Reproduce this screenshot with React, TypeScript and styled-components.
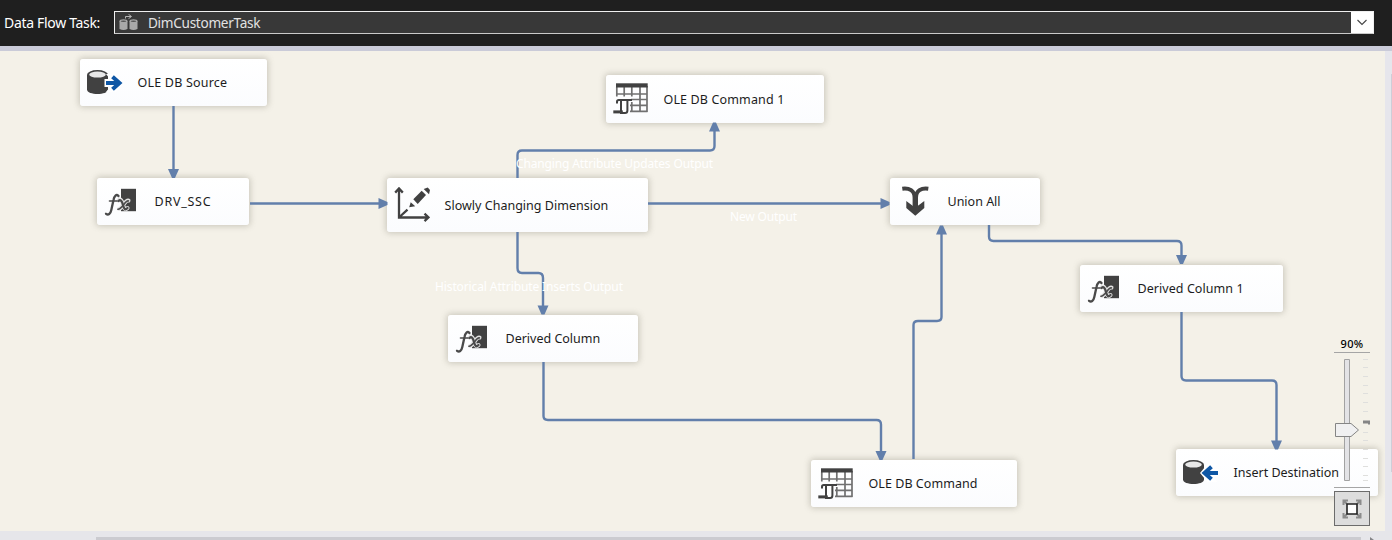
import React from 'react';
import styled, { createGlobalStyle } from 'styled-components';

const GlobalStyle = createGlobalStyle`
  *, *::before, *::after { box-sizing: border-box; }
  body { margin: 0; overflow: hidden; }
`;

const Page = styled.div`
  display: flex;
  flex-direction: column;
  width: 1392px;
  height: 540px;
  background: #e6e6ea;
  font-family: 'Noto Sans', sans-serif;
`;

const Header = styled.header`
  display: flex;
  align-items: flex-start;
  height: 51px;
  flex: none;
  padding: 11px 0 0 4px;
  background: #1f1f1f;
  border-bottom: 5px solid #cacbd8;
`;

const HeaderLabel = styled.label`
  width: 110px;
  font-size: 14px;
  line-height: 23px;
  letter-spacing: -0.32px;
  color: #fff;
  white-space: nowrap;
`;

const Select = styled.div`
  display: flex;
  align-items: stretch;
  width: 1260px;
  height: 23px;
  border: 1px solid #f0f0f0;
  border-bottom-color: #c9c9c9;
  background: #383838;
`;

const SelectValue = styled.div`
  display: flex;
  flex: 1;
  align-items: center;
  gap: 10px;
  padding-left: 4px;
  font-size: 13.6px;
  line-height: 21px;
  letter-spacing: -0.3px;
  color: #e2e2e2;
`;

const SelectArrow = styled.div`
  display: flex;
  align-items: center;
  justify-content: center;
  width: 22px;
  background: #fff;
`;

const Body = styled.div`
  display: flex;
  height: 480px;
`;

const Canvas = styled.main`
  position: relative;
  width: 1385px;
  height: 480px;
  overflow: hidden;
  background: #f4f1e8;
`;

const VerticalTrack = styled.div`
  display: flex;
  justify-content: flex-end;
  width: 7px;
  padding-top: 23px;
  background: #e6e6ec;
`;

const VerticalThumb = styled.div`
  width: 1px;
  height: 398px;
  background: #ceced8;
`;

const HorizontalTrack = styled.div`
  display: flex;
  height: 9px;
  padding: 6px 0 0 96px;
  background: #e6e6ea;
`;

const HorizontalThumb = styled.div`
  width: 1265px;
  height: 3px;
  background: #cbcbd0;
`;

const ScrollArrow = styled.svg`
  margin: 0 0 0 9px;
`;

const Edges = styled.svg`
  position: absolute;
  inset: 0;
`;

const EdgeLabel = styled.text`
  font: 12px 'Noto Sans', sans-serif;
  fill: #fff;
`;

const NodeCard = styled.div<{ $x: number; $y: number; $w: number; $h: number }>`
  position: absolute;
  left: ${(p) => p.$x}px;
  top: ${(p) => p.$y - 51}px;
  width: ${(p) => p.$w}px;
  height: ${(p) => p.$h}px;
  display: flex;
  align-items: center;
  padding-left: 6px;
  border-radius: 3px;
  background: linear-gradient(#ffffff, #fbfcfe);
  box-shadow: 0 0 6px 1px rgba(110, 105, 90, 0.33);
`;

const NodeLabel = styled.span<{ $spacing: number }>`
  margin-left: 14.5px;
  font-size: 12.5px;
  line-height: 19px;
  letter-spacing: ${(p) => p.$spacing}px;
  color: #1c1c1c;
  white-space: nowrap;
`;

const Icon = styled.svg`
  flex: none;
  display: block;
`;

const ZoomPanel = styled.div`
  position: absolute;
  left: 1334px;
  top: 286px;
  width: 36px;
  display: flex;
  flex-direction: column;
`;

const ZoomValue = styled.div`
  height: 16px;
  font-size: 11px;
  font-weight: 500;
  line-height: 14px;
  letter-spacing: 0.3px;
  text-align: center;
  color: #000;
  border-bottom: 1px solid #a5a5a5;
`;

const ZoomSlider = styled.svg`
  display: block;
`;

const FitButton = styled.button`
  display: flex;
  align-items: center;
  justify-content: center;
  width: 36px;
  height: 35px;
  margin: 3px 0 0;
  padding: 0;
  border: 1px solid #6c6c6c;
  background: #dddddd;
`;

type Kind = 'source' | 'destination' | 'fx' | 'dimension' | 'command' | 'union';

const DARK = '#414141';
const BLUE = '#0f57a5';

function NodeIcon({ kind }: { kind: Kind }) {
  if (kind === 'source' || kind === 'destination') {
    return (
      <Icon width="37" height="30" viewBox="0 0 37 30">
        <path d="M1 7v14.500c0 6 21 6 21 0V7z" fill={DARK} />
        <ellipse cx="11.500" cy="6.800" rx="10.500" ry="4.800" fill={DARK} />
        <ellipse cx="11.500" cy="6.600" rx="8.300" ry="3" fill="#e8e8e8" />
        {kind === 'source' ? (
          <>
            <path d="M18.500 11h5.500l-4-5h10l7 9-7 9h-10l4-5h-5.500z" fill="#fff" />
            <path d="M20 15h14M26.500 8.700l7 6.300-7 6.300" fill="none" stroke={BLUE} strokeWidth="4" />
          </>
        ) : (
          <>
            <path d="M37 11h-5.500l4-5h-10l-7.500 9 7.500 9h10l-4-5H37z" fill="#fff" />
            <path d="M36 15H22M29.500 8.700l-7 6.300 7 6.300" fill="none" stroke={BLUE} strokeWidth="4" />
          </>
        )}
      </Icon>
    );
  }
  if (kind === 'fx') {
    return (
      <Icon width="37" height="30" viewBox="0 0 37 30">
        <path d="M18 1.800h15v22.400H18z" fill={DARK} />
        <g fill="none" strokeLinecap="round">
          <g stroke="#e4e4e4" strokeWidth="4">
            <path d="M15.500 13.500c2-2 3.500 0 4.500 4s2 6 4.500 3.500M25.500 13.500c-3-1.500-6 8-9.500 8.500" />
          </g>
          <g stroke="#4a4a4a">
            <path d="M15.500 9c-2-2.500-4.300 0-5 4L8.300 23c-.8 4-3 5.500-5.300 3.800" strokeWidth="2.300" />
            <path d="M6.500 14h7.500" strokeWidth="1.600" />
            <path d="M15.500 14c2-2 3.500 0 4.500 4s2 5.500 4.500 3" strokeWidth="2.300" />
            <path d="M25.500 14c-3-1.500-6 7.800-10.500 8.300" strokeWidth="1.600" />
          </g>
        </g>
      </Icon>
    );
  }
  if (kind === 'dimension') {
    return (
      <Icon width="37" height="38" viewBox="0 0 37 38">
        <g fill="none" stroke={DARK} strokeWidth="2.300">
          <path d="M6 3v28.500H35M2.200 6.600 6 2.500l3.800 4.100M31.500 27.700l4 3.700-4 3.700M6.500 31l8-7.300" />
        </g>
        <path d="m20.300 13.300 8.400-8.600 4.300 4.300-8.300 9z" fill={DARK} />
        <path d="m17.700 16.300 4.500 4-6 1z" fill={DARK} />
        <path d="m30.700 2.900 4-1.400L37 4l-1 4.200z" fill={DARK} />
      </Icon>
    );
  }
  if (kind === 'command') {
    return (
      <Icon width="37" height="34" viewBox="0 0 37 34">
        <path
          d="M4.800 5v9.500M12.200 5v9.500M19.800 5v9.500M28 5v24.500M35 4v26M4 12h31.500M19 17.500h16.500M18 23.300h17.500M18 29.300h17.500M19.800 20v9.500"
          fill="none"
          stroke="#707070"
          strokeWidth="1.700"
        />
        <path d="M4 1.300h31.700v4.200H4z" fill={DARK} />
        <path d="M9 18h6.300v13H9z" fill="#fff" />
        <path d="M5 21.500v-1.700c0-1 .8-1.700 1.800-1.700H20M9 18.500V29M15.400 18.500v10c0 1.600-1 2.600-2.400 2.600H8" fill="none" stroke={DARK} strokeWidth="2" />
        <path d="M1.300 29.900h9.500" stroke={DARK} strokeWidth="3" />
      </Icon>
    );
  }
  return (
    <Icon width="37" height="34" viewBox="0 0 37 34">
      <path d="M6.300 3.700c7-1 12.300 2 12.300 9V26M32.300 3.700c-7-1-12.300 2-12.300 9V26" fill="none" stroke={DARK} strokeWidth="4" />
      <path d="M10.300 16l9 6.800 9-6.800v7L19.300 30.800l-9-7.800z" fill={DARK} />
    </Icon>
  );
}

interface NodeSpec {
  kind: Kind;
  label: string;
  box: [number, number, number, number];
  spacing: number;
}

const nodes: NodeSpec[] = [
  { kind: 'source', label: 'OLE DB Source', box: [80, 59, 187, 47], spacing: 0.2 },
  { kind: 'fx', label: 'DRV_SSC', box: [97, 178, 152, 47], spacing: 0.75 },
  { kind: 'dimension', label: 'Slowly Changing Dimension', box: [387, 178, 261, 54], spacing: 0.02 },
  { kind: 'command', label: 'OLE DB Command 1', box: [606, 75, 218, 48], spacing: 0.14 },
  { kind: 'union', label: 'Union All', box: [890, 178, 150, 47], spacing: 0 },
  { kind: 'fx', label: 'Derived Column 1', box: [1080, 265, 203, 47], spacing: 0.06 },
  { kind: 'fx', label: 'Derived Column', box: [448, 315, 190, 47], spacing: 0 },
  { kind: 'command', label: 'OLE DB Command', box: [811, 460, 206, 47], spacing: 0.05 },
  { kind: 'destination', label: 'Insert Destination', box: [1176, 449, 202, 47], spacing: 0 },
];

const edges = [
  'M173.500 106V170',
  'M250 203.500H380',
  'M517.500 178V155Q517.500 150.500 522 150.500H710Q714.500 150.500 714.500 146V131',
  'M648 203.500H882',
  'M517.500 232V268Q517.500 273 522 273H538.500Q543 273 543 278V307',
  'M543.500 362V416Q543.500 420 548 420H876.500Q881 420 881 424.500V452',
  'M913.500 459V325Q913.500 321 918 321H937Q941.500 321 941.500 317V233',
  'M989 225V236.500Q989 241 993.500 241H1177Q1181.500 241 1181.500 245.500V257',
  'M1181.500 312V376Q1181.500 380.500 1186 380.500H1272Q1276.500 380.500 1276.500 385V442',
];

const arrows: [number, number, number][] = [
  [173.5, 178.5, 0],
  [388, 203.5, -90],
  [714.5, 122, 180],
  [890, 203.5, -90],
  [543, 315, 0],
  [881, 460.5, 0],
  [941.5, 225, 180],
  [1181.5, 264.5, 0],
  [1276.5, 450, 0],
];

const ticks = [0, 8, 17, 26, 34, 43, 52, 73, 81, 90, 99, 107, 116, 121];

export default function App() {
  return (
    <Page>
      <GlobalStyle />
      <Header>
        <HeaderLabel>Data Flow Task:</HeaderLabel>
        <Select>
          <SelectValue>
            <Icon width="19" height="17" viewBox="0 0 19 17">
              <g fill="#a9a9a9">
                <path d="M0.500 7h8v8q-4 2-8 0zM10.500 7h8v8q-4 2-8 0z" />
                <ellipse cx="4.500" cy="7" rx="4" ry="1.800" />
                <ellipse cx="14.500" cy="7" rx="4" ry="1.800" />
              </g>
              <ellipse cx="4.500" cy="7.200" rx="2.800" ry="0.800" fill="#555" />
              <ellipse cx="14.500" cy="7.200" rx="2.800" ry="0.800" fill="#555" />
              <path d="M6.500 4.500V2.500H12M9.500 0.300l3 2.200-3 2.200" fill="none" stroke="#b4b4b4" />
            </Icon>
            <span>DimCustomerTask</span>
          </SelectValue>
          <SelectArrow>
            <svg width="12" height="7" viewBox="0 0 12 7">
              <path d="m1.500 1 4.500 4.500L10.500 1" fill="none" stroke="#444" strokeWidth="1.100" />
            </svg>
          </SelectArrow>
        </Select>
      </Header>
      <Body>
        <Canvas>
          {nodes.map((n) => (
            <NodeCard key={n.label} $x={n.box[0]} $y={n.box[1]} $w={n.box[2]} $h={n.box[3]}>
              <NodeIcon kind={n.kind} />
              <NodeLabel $spacing={n.spacing}>{n.label}</NodeLabel>
            </NodeCard>
          ))}
          <Edges width="1385" height="480" viewBox="0 51 1385 480">
            <g fill="none" stroke="#627fab" strokeWidth="2.400">
              {edges.map((d) => (
                <path key={d} d={d} />
              ))}
            </g>
            <g fill="#627fab">
              {arrows.map(([x, y, r]) => (
                <path key={`${x}-${y}`} d="M-5.500-9.500h11L1.500-.5h-3z" transform={`translate(${x} ${y}) rotate(${r})`} />
              ))}
            </g>
            <EdgeLabel x="516" y="168" textLength="197">Changing Attribute Updates Output</EdgeLabel>
            <EdgeLabel x="730" y="221" textLength="67">New Output</EdgeLabel>
            <EdgeLabel x="435" y="291" textLength="188">Historical Attribute Inserts Output</EdgeLabel>
          </Edges>
          <ZoomPanel>
            <ZoomValue>90%</ZoomValue>
            <ZoomSlider width="36" height="135" viewBox="0 0 36 135">
              <path d="M10.500 6.500h5v121h-5z" fill="#e3e3e6" stroke="#a2a2a2" />
              <path d="M1.500 70.500h15.500l7.500 6.500-7.500 6.500H1.500z" fill="#f0f0f1" stroke="#858585" />
              {ticks.map((t) => (
                <path key={t} d={`M29 ${t + 6.5}h5`} stroke="#dfdfdd" />
              ))}
              <path d="M29 67.500h7v4h-2v-1h-5z" fill="#858585" />
              <path d="M0 134.500h36" stroke="#a5a5a5" />
            </ZoomSlider>
            <FitButton aria-label="Fit">
              <svg width="20" height="20" viewBox="0 0 20 20">
                <path d="M1.500 6V1.500H6M14 1.500h4.500V6M18.500 14v4.500H14M6 18.500H1.500V14M2 2l3 3M18 2l-3 3M18 18l-3-3M2 18l3-3" fill="none" stroke="#8c8c8c" strokeWidth="2" />
                <path d="M5 5h10v10H5z" fill="#fff" stroke="#222" strokeWidth="1.600" />
              </svg>
            </FitButton>
          </ZoomPanel>
        </Canvas>
        <VerticalTrack>
          <VerticalThumb />
        </VerticalTrack>
      </Body>
      <HorizontalTrack>
        <HorizontalThumb />
        <ScrollArrow width="4" height="3" viewBox="0 0 4 3">
          <path d="M0 0l4 3H0z" fill="#858588" />
        </ScrollArrow>
      </HorizontalTrack>
    </Page>
  );
}
